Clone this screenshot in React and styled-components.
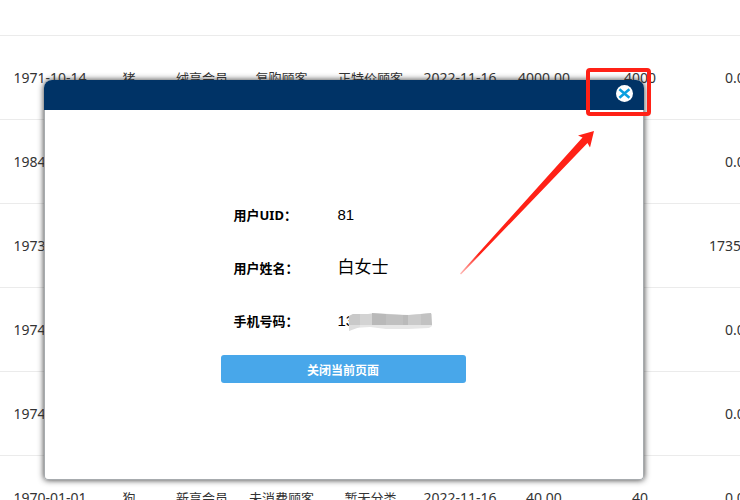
import React, { useState } from 'react';
import styled, { createGlobalStyle } from 'styled-components';

const GlobalStyle = createGlobalStyle`
    * {
        box-sizing: border-box;
    }
    body {
        margin: 0;
        background: #fff;
        overflow: hidden;
        font-family: 'Noto Sans', 'Noto Sans CJK SC', sans-serif;
    }
`;

const Page = styled.main`
    position: relative;
    height: 100vh;
    overflow: hidden;
`;
const TableWrapper = styled.div`
    padding-top: 35px;
`;
const Table = styled.table`
    width: 100%;
    min-width: 788px;
    table-layout: fixed;
    border-collapse: separate;
    border-spacing: 0;
    border-top: 1px solid #ebebeb;
`;
const Col = styled.col`
    width: ${({ $width }) => $width}px;
`;
const Cell = styled.td`
    height: 84px;
    padding: 0;
    border-bottom: 1px solid #ebebeb;
    color: #333;
    font-size: ${({ $chinese }) => ($chinese ? 13 : 14)}px;
    line-height: 20px;
    text-align: center;
    white-space: nowrap;

    &:first-child {
        padding-left: 2px;
    }
`;

const Overlay = styled.div`
    position: absolute;
    inset: 0;
    display: flex;
    align-items: flex-start;
    padding: 80px 96px 20px 44px;
`;
const Dialog = styled.section`
    position: relative;
    flex: 1;
    display: flex;
    flex-direction: column;
    min-height: 400px;
    border-radius: 8px 8px 4px 4px;
    background: #fff;
    box-shadow: 0 0 6px #333;
`;
const DialogHeader = styled.header`
    display: flex;
    align-items: center;
    justify-content: flex-end;
    height: 30px;
    padding: 0 11px 4px;
    border-radius: 8px 8px 0 0;
    background: #036;
`;
const CloseButton = styled.button`
    display: flex;
    padding: 0;
    border: 0;
    background: none;
    cursor: pointer;
`;
const DialogBody = styled.div`
    flex: 1;
    display: flex;
    flex-direction: column;
    align-items: center;
    padding: 92px 2px 0 0;
    border: 1px solid #a7abae;
    border-top: 0;
    border-radius: 0 0 4px 4px;
`;
const Fields = styled.dl`
    display: grid;
    grid-template-columns: 104px 128px;
    row-gap: 27px;
    width: 245px;
    margin: 0;
    padding-left: 13px;
`;
const Label = styled.dt`
    color: #000;
    font-size: 13px;
    font-weight: 700;
    line-height: 26px;
    white-space: nowrap;
`;
const Value = styled.dd`
    position: relative;
    margin: 0;
    color: #000;
    font-family: 'Liberation Sans', 'Noto Sans CJK SC', sans-serif;
    font-size: ${({ $size }) => $size || 15}px;
    line-height: 26px;
`;
const Mosaic = styled.svg`
    position: absolute;
    left: 10px;
    top: 4px;
`;
const SubmitButton = styled.button`
    width: 245px;
    height: 28px;
    margin-top: 21px;
    padding: 3px 0 0;
    border: 0;
    border-radius: 3px;
    background: #48a7ea;
    color: #fff;
    font-family: inherit;
    font-size: 12px;
    font-weight: 700;
    line-height: 24px;
    cursor: pointer;
`;

const Highlight = styled.div`
    position: absolute;
    top: -12px;
    right: -7px;
    width: 65px;
    height: 48px;
    border: 4px solid #ff2116;
    border-radius: 4px;
    pointer-events: none;
`;
const Arrow = styled.svg`
    position: absolute;
    top: 50px;
    right: 49px;
    pointer-events: none;
`;

const widths = [98, 62, 84, 75, 103, 76, 92, 100, 98];

const customers = [
    ['1971-10-14', '猪', '绒享会员', '复购顾客', '正特价顾客', '2022-11-16', '4000.00', '4000', '0.00'],
    ['1984-01-01', '', '', '', '', '', '', '', '0.00'],
    ['1973-01-01', '', '', '', '', '', '', '', '17350.00'],
    ['1974-01-01', '', '', '', '', '', '', '', '0.00'],
    ['1974-01-01', '', '', '', '', '', '', '', '0.00'],
    ['1970-01-01', '狗', '新享会员', '未消费顾客', '暂无分类', '2022-11-16', '40.00', '40', '0.00']
];

const CustomerTable = () => (
    <TableWrapper>
        <Table>
            <colgroup>
                {widths.map((width, i) => (
                    <Col key={i} $width={width} />
                ))}
            </colgroup>
            <tbody>
                {customers.map((row, i) => (
                    <tr key={i}>
                        {row.map((text, j) => (
                            <Cell key={j} $chinese={j > 0 && j < 5}>
                                {text}
                            </Cell>
                        ))}
                    </tr>
                ))}
            </tbody>
        </Table>
    </TableWrapper>
);

const PhoneMask = () => (
    <Mosaic width="85" height="20" viewBox="0 0 85 20" aria-hidden="true">
        <path d="M1 4L5 2H20L24 1L62 3L82 1L84 2V14L81 16L60 17H38L22 15L6 16L1 19Z" fill="#e6e6e6" />
        <path d="M1 4L5 2H12V13H1Z" fill="#c9c9c9" />
        <path d="M12 2H24V13H12Z" fill="#d3d3d3" />
        <path d="M24 1L38 2V13H24Z" fill="#b9b9b9" />
        <path d="M38 2L55 3V13H38Z" fill="#c0c0c0" />
        <path d="M55 3H60V13H55Z" fill="#bababa" />
        <path d="M60 3L73 2V13H60Z" fill="#cacaca" />
        <path d="M73 2L83 1L84 12V13H73Z" fill="#c2c2c2" />
        <path d="M1 13H12V15L1 19Z" fill="#dedede" />
    </Mosaic>
);

const UserDialog = ({ onClose }) => (
    <Overlay>
        <Dialog role="dialog" aria-label="用户">
            <DialogHeader>
                <CloseButton type="button" aria-label="关闭" onClick={onClose}>
                    <svg width="17" height="17" viewBox="0 0 17 17">
                        <circle cx="8.5" cy="8.5" r="8.5" fill="#fff" />
                        <path
                            d="M3.4 4.2L13.4 12.8M13.4 4.2L3.4 12.8"
                            stroke="#0a9fe0"
                            strokeWidth="2.5"
                        />
                    </svg>
                </CloseButton>
            </DialogHeader>
            <DialogBody>
                <Fields>
                    <Label>用户UID：</Label>
                    <Value>81</Value>
                    <Label>用户姓名：</Label>
                    <Value $size={17}>白女士</Value>
                    <Label>手机号码：</Label>
                    <Value>
                        13
                        <PhoneMask />
                    </Value>
                </Fields>
                <SubmitButton type="button" onClick={onClose}>
                    关闭当前页面
                </SubmitButton>
            </DialogBody>
            <Highlight />
            <Arrow width="136" height="146" viewBox="0 0 136 146" aria-hidden="true">
                <defs>
                    <linearGradient
                        id="tail"
                        gradientUnits="userSpaceOnUse"
                        x1="1"
                        y1="144"
                        x2="20"
                        y2="124"
                    >
                        <stop offset="0" stopColor="#ff2116" stopOpacity="0.3" />
                        <stop offset="1" stopColor="#ff2116" />
                    </linearGradient>
                </defs>
                <path
                    d="M1 143.5L123.5 7.5L119 5.5L135 1L131 17.5L128.5 13L2 144.5Z"
                    fill="url(#tail)"
                />
            </Arrow>
        </Dialog>
    </Overlay>
);

const App = () => {
    const [open, setOpen] = useState(true);

    return (
        <>
            <GlobalStyle />
            <Page>
                <CustomerTable />
                {open && <UserDialog onClose={() => setOpen(false)} />}
            </Page>
        </>
    );
};

export default App;
